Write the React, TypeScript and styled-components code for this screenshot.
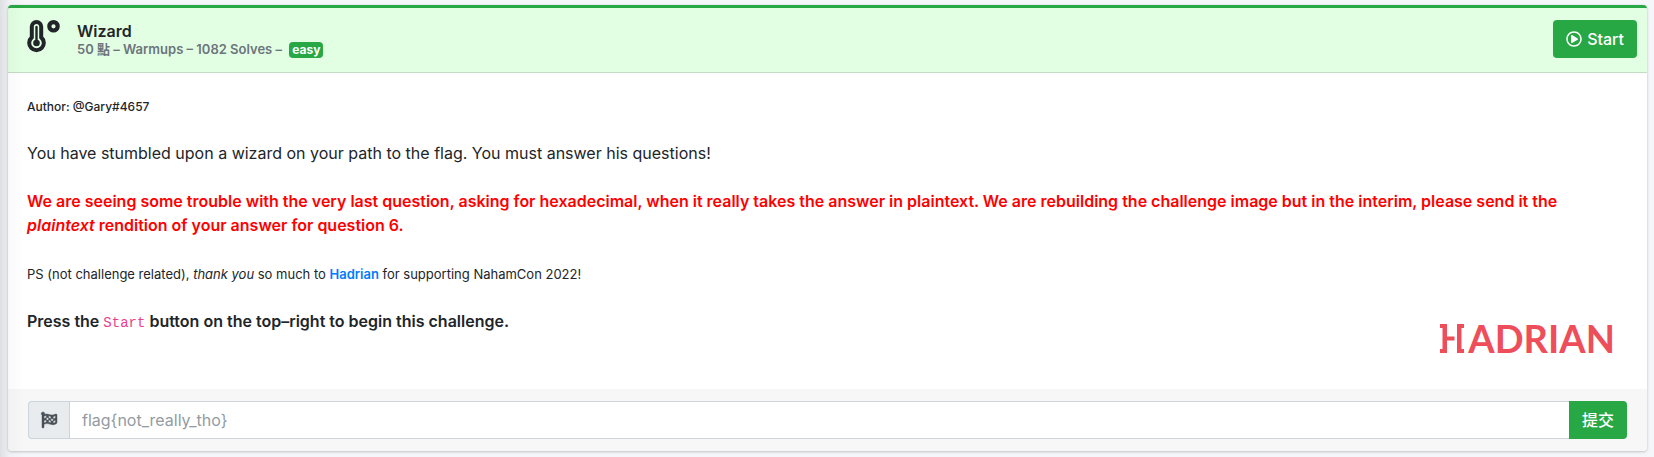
import React from "react";
import styled, { createGlobalStyle } from "styled-components";
import { FaRegPlayCircle, FaFlagCheckered } from "react-icons/fa";

const GlobalStyle = createGlobalStyle`
  *, *::before, *::after { box-sizing: border-box; }
  body {
    margin: 0;
    background: #f4f6f9;
    color: #212529;
    font-family: Inter, "Noto Sans CJK TC", sans-serif;
    font-size: 16px;
    line-height: 24px;
  }
`;

const Page = styled.main`
  position: relative;
  padding: 5px 7px 6px 8px;
`;

/* Soft shadow that the side menu throws over the content's left edge. */
const EdgeShade = styled.div`
  position: fixed;
  inset: 0 auto 0 0;
  width: 24px;
  background: linear-gradient(to right, rgba(0, 0, 0, 0.09), rgba(0, 0, 0, 0.02) 40%, transparent);
  pointer-events: none;
`;

const Card = styled.article`
  background: #fff;
  border-top: 3px solid #28a745;
  border-radius: 4px;
  box-shadow: 0 0 1px rgba(0, 0, 0, 0.13), 0 1px 3px rgba(0, 0, 0, 0.2);
  overflow: hidden;
`;

const Header = styled.header`
  display: flex;
  align-items: flex-start;
  gap: 17px;
  padding: 12px 10px 14px 19px;
  background: #e3ffe3;
  border-bottom: 1px solid #c3dcc5;
`;

const HeaderIcon = styled.svg`
  width: 33px;
  height: 33px;
  flex: none;
`;

const Heading = styled.div`
  flex: 1;
  padding-top: 1px;
`;

const Title = styled.h1`
  margin: 0;
  font-size: 16px;
  font-weight: 600;
  line-height: 20px;
`;

const Meta = styled.div`
  color: #6c757d;
  font-size: 13px;
  font-weight: 600;
  line-height: 16px;
`;

const Badge = styled.span`
  display: inline-block;
  margin-left: 4px;
  padding: 0 3px;
  border-radius: 4px;
  background: #28a745;
  color: #fff;
  font-size: 12px;
  font-weight: 700;
  line-height: 16px;
`;

const Button = styled.button<{ $attached?: boolean }>`
  display: inline-flex;
  align-items: center;
  gap: 5px;
  height: 38px;
  padding: 0 13px;
  border: 0;
  border-radius: ${(p) => (p.$attached ? "0 4px 4px 0" : "4px")};
  background: #28a745;
  color: #fff;
  font: inherit;
  font-weight: 500;
  cursor: pointer;
`;

const Body = styled.div`
  padding: 20px 20px 35px 19px;
`;

const Paragraph = styled.p<{ $tone?: "strong" | "alert" }>`
  margin: 0 0 24px;
  font-weight: ${(p) => (p.$tone ? 600 : 400)};
  color: ${(p) => (p.$tone === "alert" ? "#f00" : "inherit")};
`;

const Note = styled.small`
  font-size: 13px;
  line-height: 16px;
`;

const Byline = styled.small`
  font-size: 12px;
  font-weight: 500;
  line-height: 16px;
`;

const ClosingRow = styled.div`
  display: flex;
  justify-content: space-between;
  align-items: flex-start;
  ${Paragraph} { margin: 0; }
`;

const Link = styled.a`
  color: #007bff;
  font-weight: 600;
  text-decoration: none;
`;

const Code = styled.code`
  color: #e83e8c;
  font-family: "Liberation Mono", monospace;
  font-size: 14px;
  font-weight: 400;
  line-height: 16px;
`;

const Logo = styled.div`
  display: flex;
  align-items: center;
  gap: 4px;
  margin-top: 13px;
  padding-right: 12px;
  color: #ee4e5a;
  font-family: Lato, sans-serif;
  font-size: 38px;
  font-weight: 700;
  line-height: 32px;
`;

const LogoMark = styled.svg`
  width: 24px;
  height: 29px;
  fill: currentColor;
`;

const Footer = styled.form`
  display: flex;
  padding: 12px 20px;
  background: #f7f7f7;
`;

const Prefix = styled.label`
  display: flex;
  align-items: center;
  padding: 0 12px;
  border: 1px solid #ced4da;
  border-right: 0;
  border-radius: 4px 0 0 4px;
  background: #e9ecef;
  color: #495057;
  svg { stroke-width: 14px; overflow: visible; }
`;

const FlagInput = styled.input`
  flex: 1;
  min-width: 0;
  height: 38px;
  padding: 0 12px;
  border: 1px solid #ced4da;
  border-right: 0;
  border-radius: 0;
  color: #495057;
  font: inherit;
  &::placeholder { color: #939ba2; opacity: 1; }
`;

export default function App() {
  return (
    <Page>
      <GlobalStyle />
      <Card>
        <Header>
          <HeaderIcon viewBox="0 0 33 33" fill="none" stroke="#212529" aria-hidden="true">
            <path d="M9.5 2A4.7 4.7 0 0 0 4.8 6.7V17.4A7.3 7.3 0 1 0 14.2 17.4V6.7A4.7 4.7 0 0 0 9.5 2z" strokeWidth="4" />
            <path d="M9.5 7v16" strokeWidth="2.4" strokeLinecap="round" />
            <circle cx="9.5" cy="23" r="3.3" fill="#212529" stroke="none" />
            <circle cx="26.5" cy="6.3" r="4.2" strokeWidth="4.2" />
          </HeaderIcon>
          <Heading>
            <Title>Wizard</Title>
            <Meta>50 點 – Warmups – 1082 Solves – <Badge>easy</Badge></Meta>
          </Heading>
          <Button type="button"><FaRegPlayCircle aria-hidden="true" />Start</Button>
        </Header>
        <Body>
          <Paragraph><Byline>Author: @Gary#4657</Byline></Paragraph>
          <Paragraph>You have stumbled upon a wizard on your path to the flag. You must answer his questions!</Paragraph>
          <Paragraph $tone="alert">
            We are seeing some trouble with the very last question, asking for hexadecimal, when it really takes the answer in
            plaintext. We are rebuilding the challenge image but in the interim, please send it the <em>plaintext</em> rendition
            of your answer for question 6.
          </Paragraph>
          <Paragraph>
            <Note>
              PS (not challenge related), <em>thank you</em> so much to <Link href="#hadrian">Hadrian</Link> for supporting
              NahamCon 2022!
            </Note>
          </Paragraph>
          <ClosingRow>
            <Paragraph $tone="strong">
              Press the <Code>Start</Code> button on the top–right to begin this challenge.
            </Paragraph>
            <Logo>
              <LogoMark viewBox="0 0 24 29" role="img" aria-label="Hadrian emblem">
                <path d="M0 0h7v12.500h7.500v4H7V29H0v-4h2.500V4H0zM17 0h7v4h-2.500v21H24v4h-7z" />
              </LogoMark>
              ADRIAN
            </Logo>
          </ClosingRow>
        </Body>
        <Footer onSubmit={(e) => e.preventDefault()}>
          <Prefix htmlFor="flag" aria-label="Flag"><FaFlagCheckered /></Prefix>
          <FlagInput id="flag" type="text" placeholder="flag{not_really_tho}" />
          <Button type="submit" $attached>提交</Button>
        </Footer>
      </Card>
      <EdgeShade />
    </Page>
  );
}
